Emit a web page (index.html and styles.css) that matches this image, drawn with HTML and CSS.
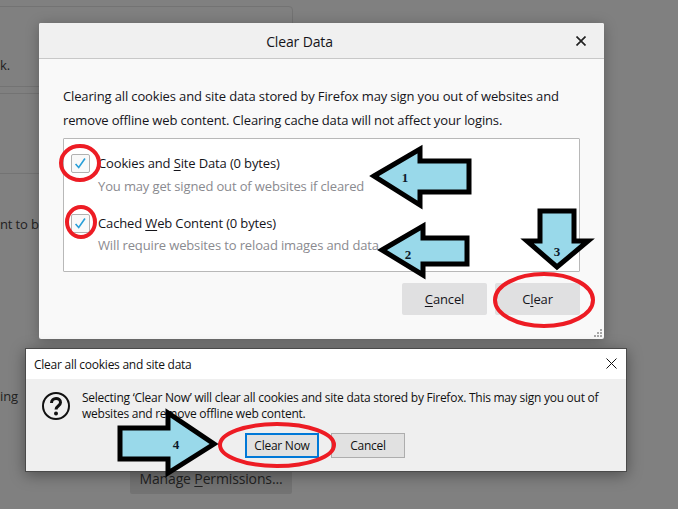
FILE: index.html
```html
<!DOCTYPE html>
<html lang="en">
<head>
<meta charset="utf-8">
<title>Clear Data</title>
<link rel="stylesheet" href="styles.css">
</head>
<body>
<div class="stage">
  <div class="backdrop">
    <div class="bg-card"><span class="bg-k">k.</span><div class="bg-rule"></div></div>
    <div class="bg-rule-wide"></div>
    <span class="bg-text bg-nt">nt to b</span>
    <span class="bg-text bg-ing">ing</span>
    <div class="bg-button"><span>Manage <u>P</u>ermissions...</span></div>
  </div>

  <section class="dialog-data">
    <header class="data-head">
      <h1 class="data-title">Clear Data</h1>
      <svg class="data-close" viewBox="0 0 10 10"><path d="M0.500 0.500 9.500 9.500M9.500 0.500 0.500 9.500"/></svg>
    </header>
    <div class="data-body">
      <p class="data-desc">Clearing all cookies and site data stored by Firefox may sign you out of websites and remove offline web content. Clearing cache data will not affect your logins.</p>
      <div class="data-box">
        <div class="option">
          <div class="check"><svg viewBox="0 0 19 19"><path d="M4 10 7.500 14 14.500 4"/></svg></div>
          <div class="option-text">
            <div class="option-label">Cookies and <u>S</u>ite Data (0 bytes)</div>
            <div class="option-sub">You may get signed out of websites if cleared</div>
          </div>
        </div>
        <div class="option">
          <div class="check"><svg viewBox="0 0 19 19"><path d="M4 10 7.500 14 14.500 4"/></svg></div>
          <div class="option-text option-text-tight">
            <div class="option-label">Cached <u>W</u>eb Content (0 bytes)</div>
            <div class="option-sub">Will require websites to reload images and data</div>
          </div>
        </div>
      </div>
      <div class="data-actions">
        <button class="data-btn"><u>C</u>ancel</button>
        <button class="data-btn">C<u>l</u>ear</button>
      </div>
    </div>
    <svg class="grip" viewBox="0 0 9 9"><path d="M6 0h2v2H6zM3 3h2v2H3zM6 3h2v2H6zM0 6h2v2H0zM3 6h2v2H3zM6 6h2v2H6z"/></svg>
  </section>

  <section class="dialog-confirm">
    <header class="confirm-head">
      <span>Clear all cookies and site data</span>
      <svg class="confirm-close" viewBox="0 0 11 11"><path d="M0.500 0.500 10.500 10.500M10.500 0.500 0.500 10.500"/></svg>
    </header>
    <div class="confirm-body">
      <div class="confirm-main">
        <svg class="question" viewBox="0 0 30 30"><circle cx="15" cy="15" r="13"/><path class="hook" d="M10.500 12c0-6 9-6 9-.5 0 3.500-4.500 3.500-4.500 7"/><circle class="dot" cx="15" cy="22.500" r="2"/></svg>
        <p class="confirm-text">Selecting ‘Clear Now’ will clear all cookies and site data stored by Firefox. This may sign you out of websites and remove offline web content.</p>
      </div>
      <div class="confirm-actions">
        <button class="win-btn win-primary">Clear Now</button>
        <button class="win-btn">Cancel</button>
      </div>
    </div>
  </section>

  <svg class="annotations" viewBox="0 0 678 509">
    <ellipse cx="80" cy="163" rx="19" ry="17"/>
    <ellipse cx="81" cy="222" rx="14" ry="15"/>
    <ellipse cx="544" cy="300" rx="49" ry="26"/>
    <ellipse cx="277" cy="445" rx="57" ry="21"/>
    <polygon points="374,176 420,149 420,161 469,161 469,192 420,192 420,205"/>
    <polygon points="382,250 423,226 423,238 467,238 467,264 423,264 423,275"/>
    <polygon points="540,211 574,211 574,241 588,241 557,267 527,241 540,241"/>
    <polygon points="120,428 168,428 168,413 214,444 168,473 168,459 120,459"/>
    <text x="405" y="182">1</text>
    <text x="408" y="259">2</text>
    <text x="557" y="256">3</text>
    <text x="176" y="449">4</text>
  </svg>
</div>
</body>
</html>
```
FILE: styles.css
```css
* { box-sizing: border-box; }
html, body { margin: 0; padding: 0; }
body {
  width: 678px;
  height: 509px;
  overflow: hidden;
  font-family: "Open Sans", "Noto Sans", sans-serif;
  color: #15141a;
  letter-spacing: -0.14px;
}
u { text-underline-offset: 2px; }
.stage { position: relative; width: 678px; height: 509px; overflow: hidden; background: #808080; }
.backdrop { position: absolute; inset: 0; }
.bg-card {
  position: absolute; left: -10px; top: 6px; width: 303px; height: 88px;
  border: 1px solid #737373; border-radius: 4px;
}
.bg-k { position: absolute; left: 9px; top: 49px; font-size: 13px; color: #222; }
.bg-rule { position: absolute; left: 0; right: 0; top: 79px; border-top: 1px solid #737373; }
.bg-rule-wide { position: absolute; left: 0; width: 40px; top: 173px; border-top: 1px solid #737373; }
.bg-text { position: absolute; left: 0; font-size: 13px; color: #222; white-space: nowrap; }
.bg-nt { top: 215px; }
.bg-ing { top: 387px; }
.bg-button {
  position: absolute; left: 130px; top: 466px; width: 162px; height: 28px; padding-bottom: 4px;
  background: #737373; border-radius: 2px; font-size: 14px; color: #222;
  display: flex; align-items: center; justify-content: center; white-space: nowrap;
}

.dialog-data {
  position: absolute; left: 39px; top: 23px; width: 565px; height: 316px;
  background: #f9f9f9; border-radius: 2px; overflow: hidden;
  box-shadow: 0 2px 14px rgba(0,0,0,.28);
}
.data-head {
  height: 36px; background: #f0f0f0; border-bottom: 1px solid #c8c8c8; padding: 2px 44px 0 0;
  display: flex; align-items: center; justify-content: center; position: relative;
}
.data-title { margin: 0; font-size: 14px; font-weight: 400; }
.data-close {
  position: absolute; right: 18px; top: 13px; width: 10px; height: 10px;
  fill: none; stroke: #222; stroke-width: 1.700;
}
.data-body { padding: 25px 24px 0; }
.data-desc { margin: 0; font-size: 13px; line-height: 24px; width: 517px; }
.data-box {
  margin-top: 6px; height: 134px; background: #fff;
  border: 1px solid #b8b8b8; border-radius: 1px; padding: 15px 7px 0;
  display: flex; flex-direction: column; gap: 14px;
}
.option { display: flex; gap: 8px; height: 46px; }
.check {
  width: 19px; height: 19px; background: #f9f9f9;
  border: 1px solid #b1b1b1; border-radius: 2px; flex: none;
}
.check svg { display: block; width: 17px; height: 17px; fill: none; stroke: #2a9fd8; stroke-width: 1.800; }
.option-text { display: flex; flex-direction: column; gap: 5px; font-size: 13px; line-height: 18px; white-space: nowrap; }
.option-text-tight { gap: 4px; }
.option-sub { color: #8a8a8f; }
.data-actions { margin-top: 11px; display: flex; justify-content: flex-end; gap: 8px; }
.data-btn {
  width: 85px; height: 32px; border: 0; border-radius: 2px; background: #e0e0e1;
  font: inherit; font-size: 13px; letter-spacing: inherit; color: #15141a; padding: 0;
}
.grip { position: absolute; right: 1px; bottom: 1px; width: 9px; height: 9px; fill: #a8a8a8; }

.dialog-confirm {
  position: absolute; left: 25px; top: 348px; width: 602px; height: 124px;
  background: #efefef; border: 1px solid #4a4a4a;
  box-shadow: 0 3px 14px rgba(0,0,0,.38);
  display: flex; flex-direction: column;
  letter-spacing: -0.25px;
}
.confirm-head {
  height: 30px; background: #fff; padding: 0 9px 0 8px;
  display: flex; align-items: center; justify-content: space-between;
  font-size: 12px; color: #111;
}
.confirm-close { width: 11px; height: 11px; fill: none; stroke: #111; stroke-width: 1; margin-top: -2px; }
.confirm-body { flex: 1; display: flex; flex-direction: column; }
.confirm-main { display: flex; padding: 11px 14px 0 15px; gap: 11px; height: 54px; }
.question { width: 30px; height: 30px; flex: none; margin-top: 1px; fill: none; stroke: #111; stroke-width: 2; }
.question .hook { stroke-width: 3; }
.question .dot { fill: #111; stroke: none; }
.confirm-text { margin: 0; font-size: 12px; line-height: 16px; color: #111; }
.confirm-actions { display: flex; justify-content: flex-start; gap: 12px; padding-left: 219px; }
.win-btn {
  height: 25px; width: 74px; padding: 0; background: #e1e1e1; border: 1px solid #adadad;
  font: inherit; font-size: 12px; letter-spacing: inherit; color: #111;
}
.win-primary { border: 2px solid #0078d7; }

.annotations { position: absolute; left: 0; top: 0; width: 678px; height: 509px; pointer-events: none; }
.annotations ellipse { fill: none; stroke: #ed1c24; stroke-width: 4; }
.annotations polygon { fill: #99d9ea; stroke: #000; stroke-width: 5; stroke-linejoin: miter; }
.annotations text { font-family: "Liberation Serif", serif; font-weight: 700; font-size: 13px; fill: #0c1a2a; text-anchor: middle; }
```
